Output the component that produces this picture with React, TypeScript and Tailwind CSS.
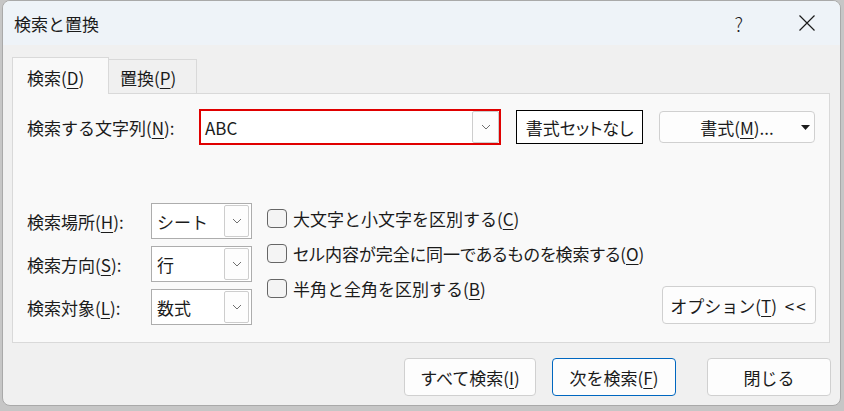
import type { ReactNode } from 'react'

const FONT = { fontFamily: '"Noto Sans CJK JP", "Noto Sans", sans-serif' }

function Key({ k }: { k: string }) {
  return <span className="underline underline-offset-[3px] decoration-1">{k}</span>
}

function Chevron() {
  return (
    <svg width="10" height="6" viewBox="0 0 10 6" fill="none">
      <path d="M1 1 L5 5 L9 1" stroke="#707070" strokeWidth="1" />
    </svg>
  )
}

function DropButton({ className }: { className: string }) {
  return (
    <div className={`flex items-center justify-center border border-[#cdcdcd] rounded-[2px] bg-[#fdfdfd] ${className}`}>
      <Chevron />
    </div>
  )
}

function Select({ value }: { value: string }) {
  return (
    <div className="w-[101px] h-[36px] border border-[#adadad] bg-white flex items-center pl-[5px] pr-[2px]">
      <span className="flex-1 leading-none">{value}</span>
      <DropButton className="w-[25px] h-[32px]" />
    </div>
  )
}

function Check({ children, tight }: { children: ReactNode; tight?: boolean }) {
  return (
    <div className="h-[35px] flex items-center">
      <div className="w-[20px] h-[19px] rounded-[4px] border border-[#666666] bg-[#f4f4f4]" />
      <span className={`ml-[6px] leading-none ${tight ? '[font-feature-settings:"palt"]' : ''}`}>{children}</span>
    </div>
  )
}

function Button({ children, className, primary }: { children: ReactNode; className: string; primary?: boolean }) {
  return (
    <button
      type="button"
      className={`flex items-center justify-center rounded-[4px] border bg-[#fdfdfd] leading-none ${
        primary ? 'border-[#0067c0]' : 'border-[#d0d0d0]'
      } ${className}`}
    >
      {children}
    </button>
  )
}

export default function App() {
  return (
    <div className="w-[844px] h-[411px] bg-[#c6c6c6] pl-[2px] pr-[3px] pb-[5px] text-[17px] text-[#1b1b1b]" style={FONT}>
      <div className="h-full flex flex-col rounded-[8px] border border-[#a9a9a9] bg-[#f0f0f0] overflow-hidden">
        {/* title bar */}
        <div className="h-[44px] shrink-0 bg-[#eef3f8] flex items-center pl-[11px]">
          <span className="leading-none">検索と置換</span>
          <span className="ml-auto leading-none text-[19px] font-light">?</span>
          <svg className="ml-[56px] mr-[25px]" width="16" height="16" viewBox="0 0 16 16">
            <path d="M0.5 0.5 L15.5 15.5 M15.5 0.5 L0.5 15.5" stroke="#1b1b1b" strokeWidth="1.2" />
          </svg>
        </div>

        <div className="pt-[12px] pl-[9px] pr-[10px]">
          {/* tabs */}
          <div className="flex items-end h-[36px]">
            <div className="relative z-10 w-[97px] h-[37px] mb-[-1px] border border-b-0 border-[#d9d9d9] bg-[#f9f9f9] pl-[14px] pt-[11px] leading-none">
              検索(<Key k="D" />)
            </div>
            <div className="w-[88px] h-[34px] border border-l-0 border-b-0 border-[#d9d9d9] bg-[#f0f0f0] pl-[11px] pt-[9px] leading-none">
              置換(<Key k="P" />)
            </div>
          </div>

          {/* panel */}
          <div className="h-[250px] border border-[#d9d9d9] bg-[#f9f9f9] pl-[14px] pr-[13px] pt-[15px]">
            <div className="flex items-center h-[36px]">
              <span className="w-[172px] leading-none">
                検索する文字列(<Key k="N" />):
              </span>
              <div className="w-[302px] h-[36px] border-2 border-[#e00000] bg-white flex items-center pl-[4px]">
                <span className="flex-1 leading-none">ABC</span>
                <DropButton className="w-[27px] h-[32px]" />
              </div>
              <button
                type="button"
                className='ml-[15px] w-[127px] h-[34px] border border-black bg-white leading-none [font-feature-settings:"palt"]'
              >
                書式セットなし
              </button>
              <Button className="relative ml-[16px] w-[156px] h-[32px]">
                <span>
                  書式(<Key k="M" />)...
                </span>
                <svg className="absolute right-[4px] top-[13px]" width="9" height="5" viewBox="0 0 9 5">
                  <path d="M0 0 L9 0 L4.5 5 Z" fill="#1b1b1b" />
                </svg>
              </Button>
            </div>

            <div className="mt-[58px] flex">
              <div className="grid grid-cols-[124px_101px] gap-y-[7px] items-center">
                <span className="leading-none">
                  検索場所(<Key k="H" />):
                </span>
                <Select value="シート" />
                <span className="leading-none">
                  検索方向(<Key k="S" />):
                </span>
                <Select value="行" />
                <span className="leading-none">
                  検索対象(<Key k="L" />):
                </span>
                <Select value="数式" />
              </div>

              <div className="ml-[15px] mt-[-2px] flex flex-col">
                <Check>
                  大文字と小文字を区別する(<Key k="C" />)
                </Check>
                <Check tight>
                  セル内容が完全に同一であるものを検索する(<Key k="O" />)
                </Check>
                <Check>
                  半角と全角を区別する(<Key k="B" />)
                </Check>
              </div>

              <Button className="ml-auto self-end mb-[1px] w-[154px] h-[38px]">
                <span>
                  オプション(<Key k="T" />) <span className="ml-[4px] tracking-[2px]">&lt;&lt;</span>
                </span>
              </Button>
            </div>
          </div>

          {/* bottom buttons */}
          <div className="mt-[15px] flex justify-end mr-[-1px]">
            <Button className="w-[132px] h-[38px]">
              すべて検索(<Key k="I" />)
            </Button>
            <Button primary className="ml-[16px] w-[124px] h-[38px]">
              次を検索(<Key k="F" />)
            </Button>
            <Button className="ml-[31px] w-[124px] h-[38px]">閉じる</Button>
          </div>
        </div>
      </div>
    </div>
  )
}
